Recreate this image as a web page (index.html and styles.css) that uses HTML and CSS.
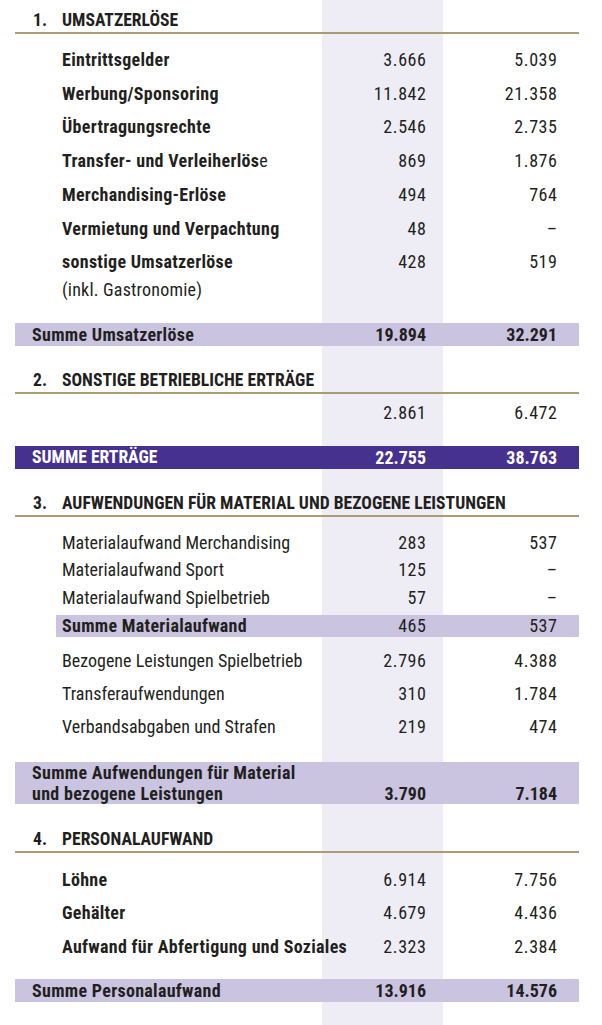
FILE: index.html
```html
<!DOCTYPE html>
<html lang="de">
<head>
<meta charset="utf-8">
<title>Gewinn- und Verlustrechnung</title>
<link rel="stylesheet" href="styles.css">
</head>
<body>
<main class="sheet">
  <h2 class="head head-1"><span class="hn">1.</span><span>UMSATZERLÖSE</span></h2>
  <div class="rows rows-lg">
    <div class="row b"><span class="lab">Eintrittsgelder</span><span class="n">3.666</span><span class="n">5.039</span></div>
    <div class="row b"><span class="lab">Werbung/Sponsoring</span><span class="n">11.842</span><span class="n">21.358</span></div>
    <div class="row b"><span class="lab">Übertragungsrechte</span><span class="n">2.546</span><span class="n">2.735</span></div>
    <div class="row b"><span class="lab">Transfer- und Verleiherlös<span class="thin">e</span></span><span class="n">869</span><span class="n">1.876</span></div>
    <div class="row b"><span class="lab">Merchandising-Erlöse</span><span class="n">494</span><span class="n">764</span></div>
    <div class="row b"><span class="lab">Vermietung und Verpachtung</span><span class="n">48</span><span class="n">–</span></div>
    <div class="row b row-two"><span class="lab">sonstige Umsatzerlöse<span class="sub">(inkl. Gastronomie)</span></span><span class="n">428</span><span class="n">519</span></div>
  </div>
  <div class="sum sum-1"><span class="lab">Summe Umsatzerlöse</span><span class="n">19.894</span><span class="n">32.291</span></div>

  <h2 class="head head-2"><span class="hn">2.</span><span>SONSTIGE BETRIEBLICHE ERTRÄGE</span></h2>
  <div class="rows rows-one">
    <div class="row"><span class="lab"></span><span class="n">2.861</span><span class="n">6.472</span></div>
  </div>
  <div class="sum sum-dark"><span class="lab caps">SUMME ERTRÄGE</span><span class="n">22.755</span><span class="n">38.763</span></div>

  <h2 class="head head-3"><span class="hn">3.</span><span>AUFWENDUNGEN FÜR MATERIAL UND BEZOGENE LEISTUNGEN</span></h2>
  <div class="rows rows-sm">
    <div class="row"><span class="lab">Materialaufwand Merchandising</span><span class="n">283</span><span class="n">537</span></div>
    <div class="row"><span class="lab">Materialaufwand Sport</span><span class="n">125</span><span class="n">–</span></div>
    <div class="row"><span class="lab">Materialaufwand Spielbetrieb</span><span class="n">57</span><span class="n">–</span></div>
  </div>
  <div class="sum sum-inner"><span class="lab">Summe Materialaufwand</span><span class="n reg">465</span><span class="n reg">537</span></div>
  <div class="rows rows-md">
    <div class="row"><span class="lab">Bezogene Leistungen Spielbetrieb</span><span class="n">2.796</span><span class="n">4.388</span></div>
    <div class="row"><span class="lab">Transferaufwendungen</span><span class="n">310</span><span class="n">1.784</span></div>
    <div class="row"><span class="lab">Verbandsabgaben und Strafen</span><span class="n">219</span><span class="n">474</span></div>
  </div>
  <div class="sum sum-tall"><span class="lab">Summe Aufwendungen für Material<br>und bezogene Leistungen</span><span class="n">3.790</span><span class="n">7.184</span></div>

  <h2 class="head head-4"><span class="hn">4.</span><span>PERSONALAUFWAND</span></h2>
  <div class="rows rows-p">
    <div class="row b"><span class="lab">Löhne</span><span class="n">6.914</span><span class="n">7.756</span></div>
    <div class="row b"><span class="lab">Gehälter</span><span class="n">4.679</span><span class="n">4.436</span></div>
    <div class="row b"><span class="lab">Aufwand für Abfertigung und Soziales</span><span class="n">2.323</span><span class="n">2.384</span></div>
  </div>
  <div class="sum sum-last"><span class="lab">Summe Personalaufwand</span><span class="n">13.916</span><span class="n">14.576</span></div>
</main>
</body>
</html>
```

FILE: styles.css
```css
html, body {
  margin: 0;
  padding: 0;
  background: #ffffff;
}

body {
  color: #231f20;
  font-family: "Roboto Condensed", "Roboto", sans-serif;
  font-stretch: condensed;
  font-size: 18px;
}

.sheet {
  width: 564px;
  margin-left: 15px;
  min-height: 1025px;
  display: flex;
  flex-direction: column;
  background: linear-gradient(90deg, transparent 307px, #eeedf6 307px, #eeedf6 428px, transparent 428px);
}

/* section headings */
.head {
  margin: 0;
  display: flex;
  padding: 8px 0 0 18px;
  line-height: 24px;
  font-size: 17.6px;
  font-weight: 700;
  letter-spacing: 0;
  border-bottom: 2px solid #aa9b70;
}
.head .hn { width: 29px; flex: none; }
.head-2 { margin-top: 14px; }
.head-3 { margin-top: 14px; }
.head-4 { margin-top: 15px; }

/* rows */
.rows { display: flex; flex-direction: column; }
.row {
  display: grid;
  grid-template-columns: 1fr 60px 131px;
  padding: 0 22px 0 47px;
  align-items: start;
  white-space: nowrap;
}
.row .lab { letter-spacing: 0; }
.row.b .lab { font-weight: 700; letter-spacing: 0.3px; }
.row .lab .thin { font-weight: 400; }

.n {
  text-align: right;
  letter-spacing: 0.6px;
  margin-right: -0.6px;
}

.rows-lg { margin-top: 9px; }
.rows-lg .row { line-height: 33.7px; }
.row-two .sub {
  display: block;
  font-weight: 400;
  line-height: 22px;
  letter-spacing: 0.2px;
}

.rows-one { margin-top: 2px; }
.rows-one .row { line-height: 34px; }

.rows-sm { margin-top: 12px; }
.rows-sm .row { line-height: 27.5px; }

.rows-md { margin-top: 7.5px; }
.rows-md .row { line-height: 33px; }

.rows-p { margin-top: 10px; }
.rows-p .row { line-height: 33.5px; }

/* sum bars */
.sum {
  display: grid;
  grid-template-columns: 1fr 60px 131px;
  padding: 0 22px 0 17px;
  background: #cac4e1;
  font-weight: 700;
  line-height: 23px;
  white-space: nowrap;
  letter-spacing: 0.3px;
  align-items: end;
}
.sum .n { letter-spacing: 0; margin-right: 0; }
.sum .caps { letter-spacing: 0; font-size: 17.6px; }

.sum-1 { margin-top: 22px; }
.sum-dark {
  margin-top: 16px;
  background: #46318f;
  color: #ffffff;
}
.sum-inner {
  margin-top: 3.5px;
  margin-left: 41px;
  padding-left: 6px;
  line-height: 22px;
}
.sum-inner .n.reg {
  font-weight: 400;
  letter-spacing: 0.6px;
  margin-right: -0.6px;
}
.sum-tall {
  margin-top: 18.5px;
  line-height: 21px;
}
.sum-last { margin-top: 15.5px; }
```
